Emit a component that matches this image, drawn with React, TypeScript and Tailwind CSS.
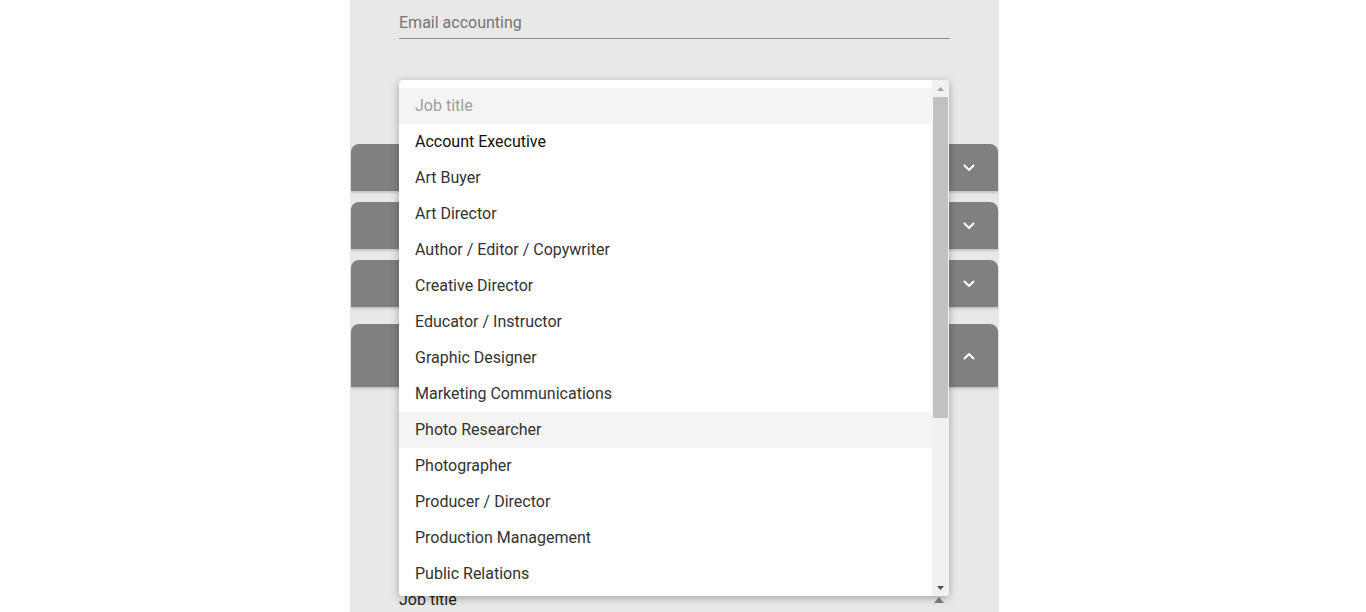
import React from "react";

const items = [
  "Account Executive",
  "Art Buyer",
  "Art Director",
  "Author / Editor / Copywriter",
  "Creative Director",
  "Educator / Instructor",
  "Graphic Designer",
  "Marketing Communications",
  "Photo Researcher",
  "Photographer",
  "Producer / Director",
  "Production Management",
  "Public Relations",
];

function Chevron({ up = false, className = "" }: { up?: boolean; className?: string }) {
  return (
    <svg width="12" height="8" viewBox="0 0 12 8" className={className} fill="none">
      <path
        d={up ? "M1.5 6.5 L6 2 L10.5 6.5" : "M1.5 1.5 L6 6 L10.5 1.5"}
        stroke="currentColor"
        strokeWidth="2"
        strokeLinecap="round"
        strokeLinejoin="round"
      />
    </svg>
  );
}

function Header({ h, up = false }: { h: string; up?: boolean }) {
  return (
    <div className={`mx-px ${h} rounded-t-[8px] bg-[#808080] shadow-[0_2px_2px_rgba(0,0,0,0.15)] flex items-center justify-end pr-[23px]`}>
      <Chevron up={up} className="text-white" />
    </div>
  );
}

export default function App() {
  return (
    <div className="relative w-[1366px] h-[612px] overflow-hidden bg-white font-['Roboto',sans-serif]">
      <div className="ml-[350px] w-[649px] h-[612px] bg-[#e8e8e8] flex flex-col">
        <div className="h-[145px] px-[49px] pt-[6px] rounded-b-[6px] bg-[#e8e8e8]">
          <div className="h-[33px] border-b border-[#8c8c8c] flex items-center pt-[2px] text-[16px] text-[#757575]">
            Email accounting
          </div>
        </div>
        <div className="flex flex-col gap-[11px]">
          <Header h="h-[47px]" />
          <Header h="h-[47px]" />
          <Header h="h-[47px]" />
        </div>
        <div className="mt-[17px]">
          <Header h="h-[63px]" up />
        </div>
        <div className="relative flex-1 px-[49px]">
          <div className="flex justify-end pr-[23px] pt-[29px]">
            <Chevron up className="text-white" />
          </div>
          <div className="mt-[70px] h-px w-[550px] bg-[#8c8c8c]" />
          <div className="mt-[57px] h-px w-[550px] bg-[#8c8c8c]" />
          <div className="mt-[35px] flex items-center justify-between w-[550px] pr-[5px]">
            <span className="text-[16px] text-[#222]">Job title</span>
            <svg width="10" height="6" viewBox="0 0 10 6"><path d="M0 6 L5 0 L10 6 Z" fill="#808080" /></svg>
          </div>
        </div>
      </div>

      <div className="absolute left-[399px] top-[80px] w-[550px] h-[516px] bg-white rounded-[4px] shadow-[0_2px_8px_rgba(0,0,0,0.3)] flex overflow-hidden">
        <div className="flex-1 pt-[8px] flex flex-col">
          <div className="h-[36px] bg-[#f4f4f4] flex items-center pl-[16px] text-[16px] text-[#9e9e9e]">Job title</div>
          {items.map((t, i) => (
            <div
              key={t}
              className={`h-[36px] flex items-center pl-[16px] text-[16px] ${
                i === 0 ? "text-[#111]" : "text-[#333]"
              } ${t === "Photo Researcher" ? "bg-[#f4f4f4]" : ""}`}
            >
              {t}
            </div>
          ))}
        </div>
        <div className="w-[17px] bg-[#f1f1f1] flex flex-col items-center">
          <div className="h-[17px] flex items-center justify-center">
            <svg width="7" height="4" viewBox="0 0 7 4"><path d="M0 4 L3.5 0 L7 4 Z" fill="#a3a3a3" /></svg>
          </div>
          <div className="w-[15px] h-[321px] bg-[#c1c1c1]" />
          <div className="flex-1" />
          <div className="h-[17px] flex items-center justify-center">
            <svg width="7" height="4" viewBox="0 0 7 4"><path d="M0 0 L3.5 4 L7 0 Z" fill="#505050" /></svg>
          </div>
        </div>
      </div>
    </div>
  );
}
